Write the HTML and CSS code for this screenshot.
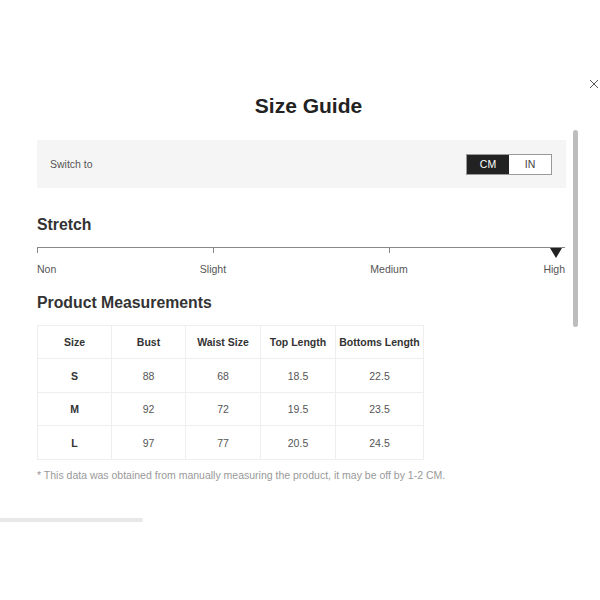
FILE: index.html
```html
<!DOCTYPE html>
<html lang="en">
<head>
    <meta charset="UTF-8">
    <meta name="viewport" content="width=device-width, initial-scale=1.0">
    <title>Size Guide</title>
    <link rel="stylesheet" href="styles.css">
</head>
<body>
    <button class="closeButton" aria-label="Close">
        <svg width="10" height="10" viewBox="0 0 10 10">
            <path d="M1 1 L9 9 M9 1 L1 9" stroke="#555" stroke-width="1" fill="none"/>
        </svg>
    </button>

    <div class="dialog">
        <h1 class="dialogTitle">Size Guide</h1>

        <div class="unitBar">
            <span class="unitLabel">Switch to</span>
            <div class="unitToggle">
                <button class="unitButton active">CM</button>
                <button class="unitButton">IN</button>
            </div>
        </div>

        <h2 class="sectionTitle stretchTitle">Stretch</h2>
        <div class="stretchScale">
            <div class="scaleLine">
                <span class="tick" style="left: 0%"></span>
                <span class="tick" style="left: 33.33%"></span>
                <span class="tick" style="left: 66.67%"></span>
                <span class="marker"></span>
            </div>
            <div class="scaleLabels">
                <span class="scaleLabel first" style="left: 0%">Non</span>
                <span class="scaleLabel" style="left: 33.33%">Slight</span>
                <span class="scaleLabel" style="left: 66.67%">Medium</span>
                <span class="scaleLabel last" style="left: 100%">High</span>
            </div>
        </div>

        <h2 class="sectionTitle measureTitle">Product Measurements</h2>
        <table class="sizeTable">
            <thead>
                <tr>
                    <th class="colSize">Size</th>
                    <th class="colBust">Bust</th>
                    <th class="colWaist">Waist Size</th>
                    <th class="colTop">Top Length</th>
                    <th class="colBottom">Bottoms Length</th>
                </tr>
            </thead>
            <tbody>
                <tr>
                    <th>S</th><td>88</td><td>68</td><td>18.5</td><td>22.5</td>
                </tr>
                <tr class="shortRow">
                    <th>M</th><td>92</td><td>72</td><td>19.5</td><td>23.5</td>
                </tr>
                <tr>
                    <th>L</th><td>97</td><td>77</td><td>20.5</td><td>24.5</td>
                </tr>
            </tbody>
        </table>

        <p class="note">* This data was obtained from manually measuring the product, it may be off by 1-2 CM.</p>
    </div>

    <div class="scrollThumb"></div>
    <div class="hScrollThumb"></div>
</body>
</html>
```

FILE: styles.css
```css
body {
    margin: 0;
    background-color: white;
    font-family: "Liberation Sans", Arial, sans-serif;
    color: #333;
}

.closeButton {
    position: absolute;
    top: 79px;
    left: 589px;
    padding: 0;
    border: none;
    background: none;
    line-height: 0;
}

.dialog {
    padding: 94px 34px 0 37px;
    width: 529px;
}

.dialogTitle {
    margin: 0 0 22px 14px;
    font-size: 21px;
    line-height: 24px;
    font-weight: 700;
    color: #222;
    text-align: center;
}

.unitBar {
    display: flex;
    align-items: center;
    justify-content: space-between;
    height: 48px;
    padding: 0 14px 0 13px;
    background-color: #f5f5f5;
}

.unitLabel {
    font-size: 10.5px;
    color: #555;
}

.unitToggle {
    display: flex;
    border: 1px solid #999;
}

.unitButton {
    width: 42px;
    height: 19px;
    padding: 0;
    border: none;
    background-color: white;
    color: #444;
    font-family: inherit;
    font-size: 10.5px;
}

.unitButton.active {
    background-color: #222;
    color: white;
}

.sectionTitle {
    margin: 0;
    font-size: 15.8px;
    line-height: 20px;
    font-weight: 700;
    color: #333;
}

.stretchTitle {
    margin-top: 27px;
}

.stretchScale {
    margin-top: 12px;
    width: 528px;
}

.scaleLine {
    position: relative;
    height: 15px;
    border-top: 1px solid #888;
}

.tick {
    position: absolute;
    top: 0;
    width: 1px;
    height: 5px;
    background-color: #888;
}

.marker {
    position: absolute;
    top: 0;
    right: 3px;
    width: 0;
    height: 0;
    border-left: 6px solid transparent;
    border-right: 6px solid transparent;
    border-top: 10px solid #222;
}

.scaleLabels {
    position: relative;
    height: 13px;
}

.scaleLabel {
    position: absolute;
    top: 0;
    font-size: 10.5px;
    line-height: 13px;
    color: #555;
    transform: translateX(-50%);
    white-space: nowrap;
}

.scaleLabel.first {
    transform: none;
}

.scaleLabel.last {
    transform: translateX(-100%);
}

.measureTitle {
    margin-top: 17px;
}

.sizeTable {
    margin-top: 12px;
    border-collapse: collapse;
    font-size: 10.5px;
}

.sizeTable th,
.sizeTable td {
    height: 32px;
    padding: 0;
    border: 1px solid #eee;
    text-align: center;
}

.sizeTable th {
    font-weight: 700;
    color: #333;
}

.sizeTable td {
    color: #555;
}

.sizeTable tbody td,
.sizeTable tbody th {
    height: 33px;
}

.sizeTable .shortRow td,
.sizeTable .shortRow th {
    height: 32px;
}

.colSize,
.colBust {
    width: 73px;
}

.colWaist,
.colTop {
    width: 74px;
}

.colBottom {
    width: 87px;
}

.note {
    margin: 9px 0 0;
    font-size: 10.5px;
    line-height: 13px;
    color: #999;
}

.scrollThumb {
    position: absolute;
    top: 130px;
    left: 573px;
    width: 5px;
    height: 197px;
    border-radius: 3px;
    background-color: #bdbdbd;
}

.hScrollThumb {
    position: absolute;
    top: 518px;
    left: 0;
    width: 143px;
    height: 4px;
    border-radius: 0 2px 2px 0;
    background-color: #e8e8e8;
}
```
